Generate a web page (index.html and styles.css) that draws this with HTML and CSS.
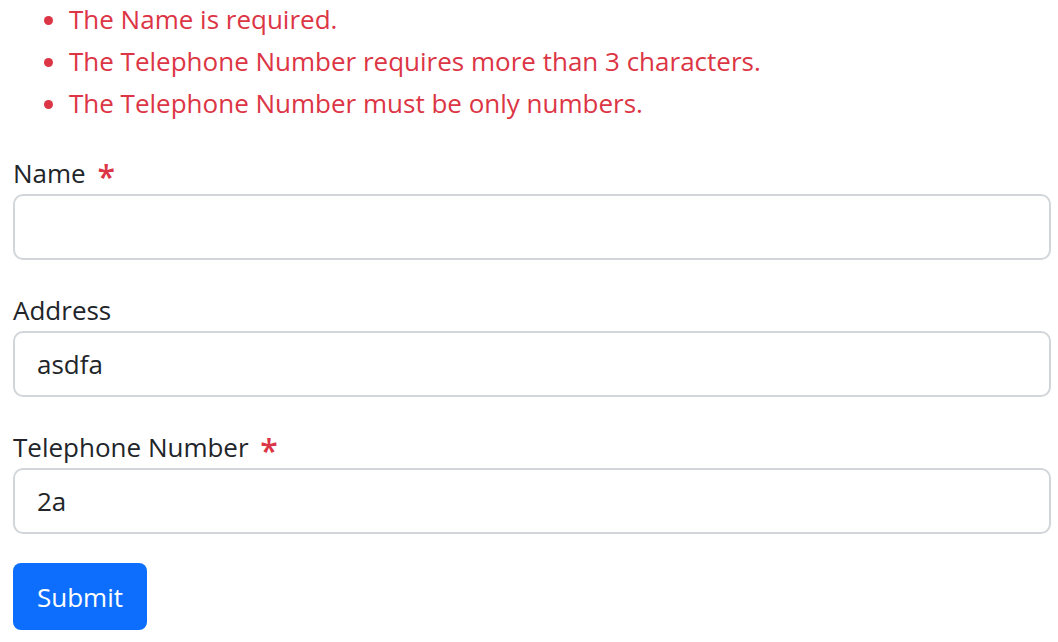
FILE: index.html
```html
<!DOCTYPE html>
<html lang="en">
<head>
<meta charset="utf-8">
<title>Form</title>
<link rel="stylesheet" href="styles.css">
</head>
<body>
<div class="page">
  <ul class="errors">
    <li>The Name is required.</li>
    <li>The Telephone Number requires more than 3 characters.</li>
    <li>The Telephone Number must be only numbers.</li>
  </ul>
  <form class="form">
    <div class="field">
      <label class="label" for="name">Name <span class="req">*</span></label>
      <input class="input" id="name" type="text" value="">
    </div>
    <div class="field">
      <label class="label" for="address">Address</label>
      <input class="input" id="address" type="text" value="asdfa">
    </div>
    <div class="field">
      <label class="label" for="tel">Telephone Number <span class="req">*</span></label>
      <input class="input" id="tel" type="text" value="2a">
    </div>
    <button class="btn" type="button">Submit</button>
  </form>
</div>
</body>
</html>
```

FILE: styles.css
```css
html, body {
  margin: 0;
  padding: 0;
  background: #fff;
}
body {
  font-family: "Open Sans", "Noto Sans", sans-serif;
  font-size: 26px;
  line-height: 42px;
  color: #212529;
}
.page {
  padding: 0 7px 0 13px;
}
.errors {
  margin: -2px 0 28px 0;
  padding-left: 56px;
  color: #dc3545;
}
.form {
  display: flex;
  flex-direction: column;
  align-items: flex-start;
}
.field {
  display: flex;
  flex-direction: column;
  width: 100%;
  margin-bottom: 29px;
}
.label {
  display: block;
  height: 42px;
  line-height: 42px;
}
.req {
  display: inline-block;
  color: #dc3545;
  margin-left: 5px;
  font-size: 32px;
  line-height: 0;
  font-weight: 600;
  transform: translateY(6px);
}
.input {
  box-sizing: border-box;
  width: 100%;
  height: 66px;
  padding: 0 22px;
  font: inherit;
  color: #212529;
  background: #fff;
  border: 2px solid #d2d6da;
  border-radius: 10px;
  outline: none;
}
.btn {
  box-sizing: border-box;
  height: 67px;
  width: 134px;
  padding: 0;
  font: inherit;
  color: #fff;
  background: #0d6efd;
  border: 0;
  border-radius: 8px;
}
```
